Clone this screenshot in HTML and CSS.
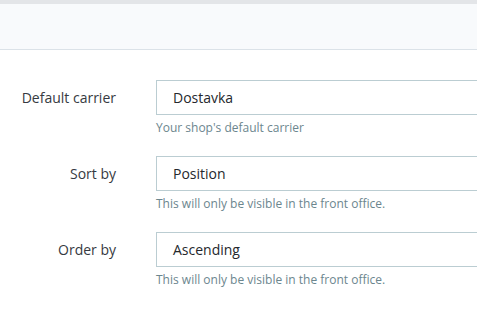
FILE: index.html
```html
<!DOCTYPE html>
<html lang="en">
  <head>
    <meta charset="UTF-8" />
    <title>Carrier options</title>
    <link rel="stylesheet" href="styles.css">
  </head>
  <body>
    <div class="topbar"></div>
    <div class="toolbar"></div>
    <form class="options">
      <div class="row">
        <label class="lbl" for="carrier">Default carrier</label>
        <div class="field">
          <div class="box" id="carrier">Dostavka</div>
          <p class="help">Your shop's default carrier</p>
        </div>
      </div>
      <div class="row">
        <label class="lbl" for="sortby">Sort by</label>
        <div class="field">
          <div class="box" id="sortby">Position</div>
          <p class="help">This will only be visible in the front office.</p>
        </div>
      </div>
      <div class="row">
        <label class="lbl" for="orderby">Order by</label>
        <div class="field">
          <div class="box" id="orderby">Ascending</div>
          <p class="help">This will only be visible in the front office.</p>
        </div>
      </div>
    </form>
  </body>
</html>
```

FILE: styles.css
```css
body {
  margin: 0;
  background: #fff;
  font-family: "Open Sans", "Liberation Sans", sans-serif;
  color: #363a41;
  overflow: hidden;
}
.topbar {
  height: 4px;
  background: #e3e5e8;
}
.toolbar {
  height: 45px;
  background: #f8fafc;
  border-bottom: 1px solid #dbe2e8;
}
.options {
  padding-top: 30px;
}
.row {
  display: grid;
  grid-template-columns: 116px 1fr;
  column-gap: 40px;
  margin-bottom: 20px;
}
.lbl {
  text-align: right;
  font-size: 14px;
  line-height: 35px;
}
.box {
  height: 33px;
  line-height: 33px;
  border: 1px solid #bbcdd2;
  border-right: none;
  padding-left: 16px;
  font-size: 14px;
  color: #25282d;
}
.help {
  margin: 5px 0 0;
  font-size: 12px;
  line-height: 16px;
  color: #6c868e;
}
```
